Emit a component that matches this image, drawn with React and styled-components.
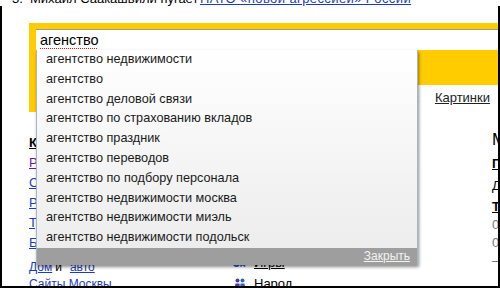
import React from "react";
import styled, { createGlobalStyle } from "styled-components";

const GlobalStyle = createGlobalStyle`
  html, body {
    margin: 0;
    padding: 0;
    background: #fff;
  }
  body {
    width: 500px;
    height: 289px;
    overflow: hidden;
    font-family: "Liberation Sans", Arial, sans-serif;
    font-size: 13px;
    color: #000;
  }
`;

const YELLOW = "#ffcc00";
const LINK = "#1a3dc1";
const VISITED = "#6a1b9a";

const suggestions = [
  "агентство недвижимости",
  "агентство",
  "агентство деловой связи",
  "агентство по страхованию вкладов",
  "агентство праздник",
  "агентство переводов",
  "агентство по подбору персонала",
  "агентство недвижимости москва",
  "агентство недвижимости миэль",
  "агентство недвижимости подольск",
];

const catalog = [
  { title: "Работа", visited: true },
  { title: "Спорт" },
  { title: "Развлечения" },
  { title: "Туризм" },
  { title: "Бизнес" },
];

const services = ["Авто", "Адреса", "Афиша", "Блоги", "Видео"];

function GamesIcon() {
  return (
    <svg width="13" height="10" viewBox="0 0 13 10">
      <circle cx="3.5" cy="5.5" r="2.6" fill="none" stroke="#2a55c8" strokeWidth="1.6" />
      <path d="M7.5 3 L12 8.5 M12 3 L7.5 8.5" stroke="#2a55c8" strokeWidth="1.6" />
    </svg>
  );
}

function NarodIcon() {
  return (
    <svg width="12" height="11" viewBox="0 0 12 11">
      <circle cx="3.5" cy="2.5" r="2" fill="#4b3aa8" />
      <circle cx="8.5" cy="2.5" r="2" fill="#2c62c9" />
      <path d="M0.5 11 L1.5 5.5 L5.5 5.5 L6 11 Z" fill="#4b3aa8" />
      <path d="M6 11 L6.5 5.5 L10.5 5.5 L11.5 11 Z" fill="#2c62c9" />
    </svg>
  );
}

export default function App() {
  return (
    <>
      <GlobalStyle />
      <NewsLine>
        <span>
          <Num>3.</Num>Михаил Саакашвили пугает <NewsLink href="#">НАТО «новой агрессией» России</NewsLink>
        </span>
      </NewsLine>
      <Frame>
        <SearchArea>
          <LeftStrip />
          <SearchMain>
            <TopBand />
            <InputBox>
              <Typed>агенство</Typed>
              <Dropdown>
                {suggestions.map((s) => (
                  <Suggestion key={s}>{s}</Suggestion>
                ))}
                <DropdownFooter>
                  <CloseLink href="#">Закрыть</CloseLink>
                </DropdownFooter>
              </Dropdown>
            </InputBox>
            <SearchLower />
            <Tabs>
              <Tab href="#">Маркет</Tab>
              <Tab href="#">Карта</Tab>
              <Tab href="#">Картинки</Tab>
            </Tabs>
          </SearchMain>
        </SearchArea>

        <Columns>
          <LeftCol>
            <CatalogTitle href="#">Каталог</CatalogTitle>
            {catalog.map((c) => (
              <CatalogLink key={c.title} href="#" $visited={c.visited}>
                {c.title}
              </CatalogLink>
            ))}
            <SubList>
              <SubRow>
                <Link href="#">Дом</Link>
                <And>и</And>
                <Link href="#">авто</Link>
              </SubRow>
              <SubRow>
                <Link href="#">Сайты Москвы</Link>
              </SubRow>
            </SubList>
          </LeftCol>

          <MidCol>
            {services.map((s) => (
              <Service key={s}>
                <IconSlot />
                <ServiceLink href="#">{s}</ServiceLink>
              </Service>
            ))}
            <Service>
              <IconSlot>
                <GamesIcon />
              </IconSlot>
              <ServiceLink href="#">Игры</ServiceLink>
            </Service>
            <Service>
              <IconSlot>
                <NarodIcon />
              </IconSlot>
              <ServiceLink href="#">Народ</ServiceLink>
            </Service>
          </MidCol>

          <RightCol>
            <CityTitle>Москва</CityTitle>
            <RightLink href="#" $top={8}>Пробки</RightLink>
            <RightText $top={4}>Днём +3</RightText>
            <RightLink href="#" $top={3}>Телепрограмма</RightLink>
            <RightTime>05:30</RightTime>
            <RightTime>05:55</RightTime>
            <RightTime>—</RightTime>
          </RightCol>
        </Columns>
      </Frame>
    </>
  );
}

const NewsLine = styled.div`
  height: 6px;
  overflow: hidden;
  display: flex;
  align-items: flex-end;
  padding-left: 12px;
  white-space: nowrap;
  line-height: 15px;
`;

const Num = styled.span`
  display: inline-block;
  width: 18px;
`;

const Link = styled.a`
  color: ${LINK};
  text-decoration: underline;
`;

const NewsLink = styled(Link)`
  margin-left: -2px;
  letter-spacing: 0.4px;
`;

const Frame = styled.div`
  height: 282px;
  box-sizing: border-box;
  border: 2px solid #000;
  border-top: none;
  overflow: hidden;
`;

const SearchArea = styled.div`
  display: flex;
  align-items: flex-start;
  margin: 17px 0 0 27px;
`;

const LeftStrip = styled.div`
  width: 7px;
  height: 89px;
  background: ${YELLOW};
`;

const SearchMain = styled.div`
  flex: 1;
  display: flex;
  flex-direction: column;
`;

const TopBand = styled.div`
  height: 6px;
  background: ${YELLOW};
`;

const InputBox = styled.div`
  position: relative;
  height: 21px;
  box-sizing: border-box;
  border-top: 1px solid #9a9a9a;
  background: #fff;
  padding-left: 4px;
  font-size: 14.5px;
  line-height: 20px;
`;

const Typed = styled.span`
  color: #000;
  text-decoration: underline dotted #e02020;
  text-decoration-thickness: 1px;
  text-underline-offset: 3px;
`;

const Dropdown = styled.div`
  position: absolute;
  top: 100%;
  left: 0;
  z-index: 10;
  width: 382px;
  box-sizing: border-box;
  border-left: 1px solid #a6b5ca;
  border-right: 1px solid #a6b5ca;
  background: linear-gradient(#ffffff, #ebebeb);
  box-shadow: 1px 2px 3px rgba(0, 0, 0, 0.45);
`;

const Suggestion = styled.div`
  height: 19.8px;
  line-height: 19.8px;
  padding-left: 9px;
  font-size: 12.7px;
  color: #1a1a1a;
  white-space: nowrap;
`;

const DropdownFooter = styled.div`
  height: 17px;
  display: flex;
  align-items: center;
  justify-content: flex-end;
  padding-right: 7px;
  background: #9e9e9e;
`;

const CloseLink = styled.a`
  color: #f2f2f2;
  font-size: 12px;
  text-decoration: underline;
`;

const SearchLower = styled.div`
  height: 35px;
  background: ${YELLOW};
`;

const Tabs = styled.div`
  display: flex;
  justify-content: flex-end;
  gap: 17px;
  margin-top: 5px;
  padding-right: 8px;
  line-height: 16px;
`;

const Tab = styled.a`
  color: #222;
  text-decoration: underline;
`;

const Columns = styled.div`
  display: grid;
  grid-template-columns: 204px 258px 1fr;
  margin: 21px 0 0 27px;
`;

const LeftCol = styled.div`
  display: flex;
  flex-direction: column;
  align-items: flex-start;
  white-space: nowrap;
`;

const CatalogTitle = styled.a`
  line-height: 20px;
  font-weight: bold;
  color: #000;
  text-decoration: underline;
`;

const CatalogLink = styled.a`
  line-height: 20px;
  color: ${(p) => (p.$visited ? VISITED : LINK)};
  text-decoration: underline;
`;

const SubList = styled.div`
  margin-top: 6px;
  line-height: 17px;
  font-size: 12px;
`;

const SubRow = styled.div`
  white-space: nowrap;
`;

const And = styled.span`
  margin: 0 8px 0 3px;
`;

const MidCol = styled.div`
  display: flex;
  flex-direction: column;
  padding-top: 14px;
  white-space: nowrap;
`;

const Service = styled.div`
  display: flex;
  align-items: center;
  gap: 8px;
  height: 21px;
`;

const IconSlot = styled.span`
  width: 13px;
  display: flex;
  justify-content: center;
`;

const ServiceLink = styled.a`
  color: #000;
  text-decoration: underline;
`;

const RightCol = styled.div`
  display: flex;
  flex-direction: column;
  align-items: flex-start;
  overflow: hidden;
  white-space: nowrap;
  padding-left: 1px;
`;

const CityTitle = styled.div`
  font-size: 17px;
  line-height: 14px;
`;

const RightLink = styled.a`
  margin-top: ${(p) => p.$top}px;
  line-height: 18px;
  font-weight: bold;
  color: #000;
  text-decoration: underline;
`;

const RightText = styled.div`
  margin-top: ${(p) => p.$top}px;
  line-height: 18px;
`;

const RightTime = styled.div`
  line-height: 18px;
  color: #777;
`;
